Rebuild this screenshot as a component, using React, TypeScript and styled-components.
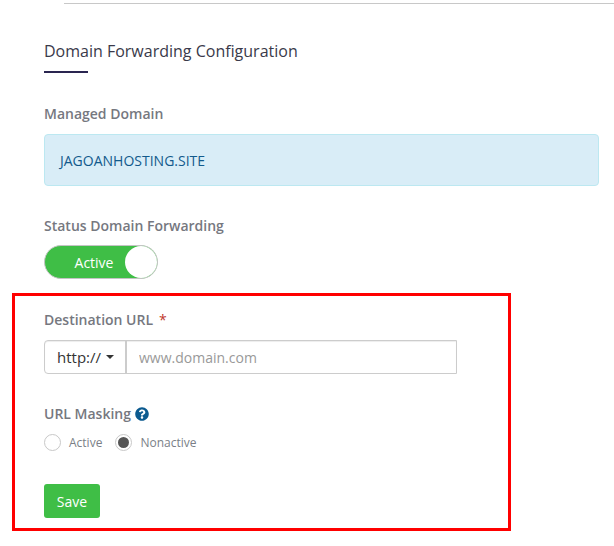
import styled, { createGlobalStyle } from "styled-components";
import { FaQuestionCircle } from "react-icons/fa";

const GlobalStyle = createGlobalStyle`
  html, body {
    margin: 0;
    padding: 0;
    background: #fff;
    font-family: "Open Sans", "Liberation Sans", sans-serif;
  }
  * {
    box-sizing: border-box;
  }
`;

const Page = styled.div`
  position: relative;
  width: 614px;
  height: 546px;
  overflow: hidden;
  padding: 3px 15px 0 44px;
`;

const TopRule = styled.div`
  height: 1px;
  margin: 0 -15px 0 20px;
  background: #c8c8c8;
`;

const Title = styled.h2`
  margin: 36px 0 0;
  font-size: 16px;
  line-height: 22px;
  font-weight: 400;
  color: #3a3a4a;
`;

const TitleBar = styled.div`
  width: 44px;
  height: 2px;
  margin-top: 9px;
  background: #2a2550;
`;

const Label = styled.div<{ $top: number }>`
  margin-top: ${(p) => p.$top}px;
  display: flex;
  align-items: center;
  font-size: 14px;
  line-height: 20px;
  font-weight: 600;
  color: #76787f;
`;

const Required = styled.span`
  margin-left: 6px;
  color: #c0392b;
  font-weight: 400;
`;

const HelpIcon = styled(FaQuestionCircle)`
  width: 14px;
  height: 14px;
  margin-left: 4px;
  color: #0b5a8f;
`;

const DomainBox = styled.div`
  margin-top: 10px;
  height: 52px;
  display: flex;
  align-items: center;
  padding-left: 15px;
  font-size: 14px;
  color: #125a8c;
  background: #d9edf7;
  border: 1px solid #bce8f1;
  border-radius: 4px;
`;

const Toggle = styled.div`
  position: relative;
  width: 114px;
  height: 34px;
  margin-top: 9px;
  padding-right: 14px;
  display: flex;
  align-items: center;
  justify-content: center;
  font-size: 14px;
  color: #fff;
  background: #3fbe46;
  border: 1px solid #c4c4c4;
  border-radius: 17px;
`;

const ToggleKnob = styled.span`
  position: absolute;
  right: 0;
  top: 0;
  width: 32px;
  height: 32px;
  border-radius: 50%;
  background: #fff;
`;

const UrlGroup = styled.div`
  margin-top: 10px;
  width: 413px;
  height: 34px;
  display: flex;
  border: 1px solid #ccc;
  border-radius: 4px 0 0 4px;
  box-shadow: inset 0 1px 1px rgba(0, 0, 0, 0.075);
`;

const ProtocolSelect = styled.div`
  width: 82px;
  display: flex;
  align-items: center;
  padding-left: 12px;
  font-size: 15px;
  font-weight: 400;
  color: #333;
  border-right: 2px solid #ccc;
`;

const Caret = styled.span`
  margin-left: 5px;
  width: 0;
  height: 0;
  border-left: 4px solid transparent;
  border-right: 4px solid transparent;
  border-top: 4px solid #333;
`;

const UrlInput = styled.input`
  flex: 1;
  min-width: 0;
  padding: 0 12px;
  border: 0;
  outline: 0;
  background: transparent;
  font: 400 14px "Open Sans", sans-serif;
  &::placeholder {
    color: #999;
    opacity: 1;
  }
`;

const RadioRow = styled.div`
  margin-top: 10px;
  display: flex;
  align-items: center;
  gap: 13px;
`;

const RadioItem = styled.label`
  display: flex;
  align-items: center;
  gap: 8px;
  font-size: 12px;
  color: #7a7f87;
`;

const RadioDot = styled.span<{ $checked?: boolean }>`
  width: 17px;
  height: 17px;
  display: flex;
  align-items: center;
  justify-content: center;
  border: 1px solid #c8c8c8;
  border-radius: 50%;
  &::after {
    content: "";
    width: 11px;
    height: 11px;
    border-radius: 50%;
    background: ${(p) => (p.$checked ? "#555" : "transparent")};
  }
`;

const SaveButton = styled.button`
  display: block;
  margin-top: 33px;
  width: 56px;
  height: 34px;
  padding: 0;
  border: 0;
  border-radius: 3px;
  font: 400 14px "Open Sans", sans-serif;
  color: #fff;
  background: #3fbe46;
`;

const Annotation = styled.div`
  position: absolute;
  left: 12px;
  top: 293px;
  width: 499px;
  height: 238px;
  border: 3px solid #f00;
  pointer-events: none;
`;

export default function App() {
  return (
    <Page>
      <GlobalStyle />
      <TopRule />
      <Title>Domain Forwarding Configuration</Title>
      <TitleBar />
      <Label $top={31}>Managed Domain</Label>
      <DomainBox>JAGOANHOSTING.SITE</DomainBox>
      <Label $top={30}>Status Domain Forwarding</Label>
      <Toggle>
        Active
        <ToggleKnob />
      </Toggle>
      <Label $top={31}>
        Destination URL<Required>*</Required>
      </Label>
      <UrlGroup>
        <ProtocolSelect>
          http://
          <Caret />
        </ProtocolSelect>
        <UrlInput placeholder="www.domain.com" />
      </UrlGroup>
      <Label $top={30}>
        URL Masking
        <HelpIcon />
      </Label>
      <RadioRow>
        <RadioItem>
          <RadioDot />
          Active
        </RadioItem>
        <RadioItem>
          <RadioDot $checked />
          Nonactive
        </RadioItem>
      </RadioRow>
      <SaveButton>Save</SaveButton>
      <Annotation />
    </Page>
  );
}
